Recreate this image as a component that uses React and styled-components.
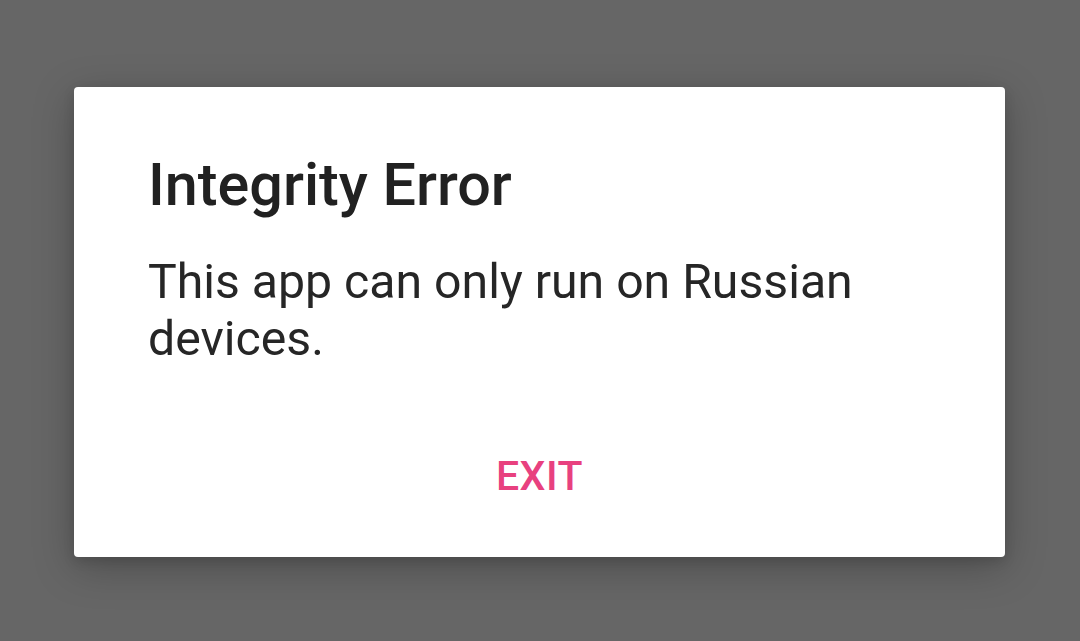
import React from "react";
import styled, { createGlobalStyle } from "styled-components";

const Global = createGlobalStyle`
  html, body { margin: 0; padding: 0; }
  body { background: #666666; font-family: Roboto, "Noto Sans", sans-serif; }
`;

const Screen = styled.div`
  width: 1080px;
  height: 641px;
  display: flex;
  align-items: flex-start;
  justify-content: flex-start;
  padding: 87px 0 0 74px;
  box-sizing: border-box;
  background: #666666;
`;

const Dialog = styled.div`
  width: 931px;
  height: 470px;
  box-sizing: border-box;
  background: #ffffff;
  border-radius: 4px;
  box-shadow: 0 10px 40px rgba(0, 0, 0, 0.25), 0 4px 12px rgba(0, 0, 0, 0.12);
  padding: 63px 74px 56px 74px;
  display: flex;
  flex-direction: column;
`;

const Title = styled.h1`
  margin: 0;
  font-family: Roboto, sans-serif;
  font-weight: 500;
  font-size: 59.3px;
  line-height: 70px;
  color: #212121;
`;

const Message = styled.p`
  margin: 33px 0 0 0;
  font-family: Roboto, sans-serif;
  font-weight: 400;
  font-size: 48.2px;
  line-height: 57px;
  color: #262626;
`;

const Actions = styled.div`
  margin-top: auto;
  display: flex;
  justify-content: center;
`;

const TextButton = styled.button`
  border: none;
  background: transparent;
  padding: 0;
  font-family: Roboto, sans-serif;
  font-weight: 500;
  font-size: 41px;
  line-height: 50px;
  letter-spacing: 0.5px;
  color: #e8417f;
  cursor: pointer;
`;

export default function App() {
  return (
    <>
      <Global />
      <Screen>
        <Dialog>
          <Title>Integrity Error</Title>
          <Message>This app can only run on Russian devices.</Message>
          <Actions>
            <TextButton>EXIT</TextButton>
          </Actions>
        </Dialog>
      </Screen>
    </>
  );
}
